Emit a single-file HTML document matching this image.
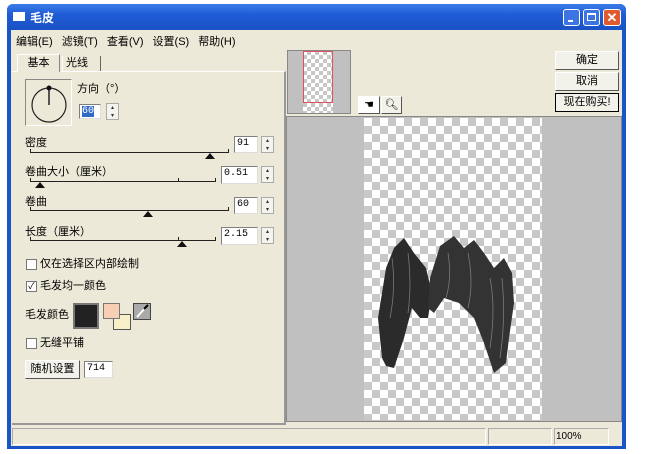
<!DOCTYPE html>
<html><head><meta charset="utf-8"><style>
body{margin:0;width:663px;height:454px;background:#fff;position:relative;overflow:hidden;font-family:"Liberation Sans","Noto Sans CJK SC",sans-serif;font-size:11px;color:#000}
.a{position:absolute}
.win{left:7px;top:4px;width:619px;height:445px;background:#1a55c8;border-radius:6px 6px 0 0}
.title{left:7px;top:4px;width:619px;height:26px;background:linear-gradient(#3a7be8,#1f5cd6 40%,#1a52c4);border-radius:6px 6px 0 0}
.body{left:11px;top:30px;width:611px;height:416px;background:#ece9d8}
.inp{background:#fff;border:1px solid #7f7f7f;border-right-color:#ddd;border-bottom-color:#ddd;box-sizing:border-box;font-size:10px;padding:1px 2px;font-family:"Liberation Mono",monospace}
.spin{width:13px;height:17px;border:1px solid #aaa;box-sizing:border-box;background:#f4f3ee;font-size:6px;line-height:8px;text-align:center;color:#333}
.btn{background:#f3f2ea;border:1px solid #fff;border-right-color:#555;border-bottom-color:#555;box-sizing:border-box;text-align:center;font-size:11px;line-height:16px}
.track{height:1px;background:#222}
.tick{width:1px;height:4px;background:#222}
.thumb{width:0;height:0;border-left:5px solid transparent;border-right:5px solid transparent;border-bottom:6px solid #111}
.cb{width:9px;height:9px;border:1px solid #777;background:#fff}
.chk{background-image:linear-gradient(45deg,#c8c8c8 25%,transparent 25%,transparent 75%,#c8c8c8 75%),linear-gradient(45deg,#c8c8c8 25%,#fff 25%,#fff 75%,#c8c8c8 75%);background-size:16px 16px;background-position:0 0,8px 8px}
</style></head><body>
<div class="a win"></div>
<div class="a title"></div>
<div class="a" style="left:13px;top:12px;width:12px;height:9px;background:#fff"></div>
<div class="a" style="left:30px;top:9px;color:#fff;font-size:12px;font-weight:bold">毛皮</div>
<div class="a" style="left:563px;top:9px;width:17px;height:17px;background:#3c74e4;border:1px solid #fff;border-radius:3px;box-sizing:border-box"><div class="a" style="left:4px;top:10px;width:5px;height:2px;background:#fff"></div></div>
<div class="a" style="left:583px;top:9px;width:17px;height:17px;background:#3c74e4;border:1px solid #fff;border-radius:3px;box-sizing:border-box"><div class="a" style="left:3px;top:3px;width:9px;height:8px;border:1px solid #fff;border-top-width:2px;box-sizing:border-box"></div></div>
<div class="a" style="left:603px;top:9px;width:18px;height:17px;background:#e05a30;border:1px solid #fff;border-radius:3px;box-sizing:border-box;color:#fff;font-size:13px;font-weight:bold;text-align:center;line-height:15px">✕</div>
<div class="a body"></div>
<div class="a" style="left:16px;top:33px;font-size:11px;word-spacing:6px">编辑(E) 滤镜(T) 查看(V) 设置(S) 帮助(H)</div>
<!-- tabs -->
<div class="a" style="left:12px;top:71px;width:272px;height:351px;border-top:1px solid #fff;border-right:2px solid #999;border-bottom:2px solid #999"></div>
<div class="a" style="left:17px;top:54px;width:43px;height:18px;background:#ece9d8;border:1px solid #fff;border-bottom:none;border-right:1px solid #888;box-sizing:border-box;text-align:center;line-height:16px">基本</div>
<div class="a" style="left:62px;top:56px;width:39px;height:15px;border-left:1px solid #fff;border-right:1px solid #666;box-sizing:border-box;padding-left:3px;line-height:14px">光线</div>
<!-- dial -->
<div class="a" style="left:25px;top:79px;width:47px;height:47px;border:1px solid #888;border-right-color:#fff;border-bottom-color:#fff;box-sizing:border-box"></div>
<svg class="a" style="left:25px;top:79px" width="47" height="47"><circle cx="24" cy="26" r="17" fill="none" stroke="#222" stroke-width="1.2"/><line x1="24" y1="26" x2="24" y2="9" stroke="#222" stroke-width="1.5"/><circle cx="24" cy="9" r="2.5" fill="#111"/></svg>
<div class="a" style="left:77px;top:80px">方向（°）</div>
<div class="a inp" style="left:79px;top:104px;width:22px;height:15px"><span style="background:#316ac5;color:#fff">60</span></div>
<div class="a spin" style="left:106px;top:103px">▴<br>▾</div>
<!-- sliders -->
<div class="a" style="left:25px;top:134px">密度</div>
<div class="a track" style="left:30px;top:152px;width:198px"></div><div class="a tick" style="left:30px;top:149px"></div><div class="a tick" style="left:228px;top:149px"></div>
<div class="a thumb" style="left:205px;top:153px"></div>
<div class="a inp" style="left:234px;top:136px;width:24px;height:17px">91</div>
<div class="a spin" style="left:261px;top:136px">▴<br>▾</div>

<div class="a" style="left:25px;top:163px">卷曲大小（厘米）</div>
<div class="a track" style="left:30px;top:181px;width:185px"></div><div class="a tick" style="left:30px;top:178px"></div><div class="a tick" style="left:178px;top:178px"></div><div class="a tick" style="left:215px;top:178px"></div>
<div class="a thumb" style="left:35px;top:182px"></div>
<div class="a inp" style="left:221px;top:166px;width:37px;height:18px">0.51</div>
<div class="a spin" style="left:261px;top:166px">▴<br>▾</div>

<div class="a" style="left:25px;top:193px">卷曲</div>
<div class="a track" style="left:30px;top:210px;width:198px"></div><div class="a tick" style="left:30px;top:207px"></div><div class="a tick" style="left:228px;top:207px"></div>
<div class="a thumb" style="left:143px;top:211px"></div>
<div class="a inp" style="left:234px;top:197px;width:24px;height:17px">60</div>
<div class="a spin" style="left:261px;top:197px">▴<br>▾</div>

<div class="a" style="left:25px;top:223px">长度（厘米）</div>
<div class="a track" style="left:30px;top:240px;width:185px"></div><div class="a tick" style="left:30px;top:237px"></div><div class="a tick" style="left:178px;top:237px"></div><div class="a tick" style="left:215px;top:237px"></div>
<div class="a thumb" style="left:177px;top:241px"></div>
<div class="a inp" style="left:221px;top:227px;width:37px;height:18px">2.15</div>
<div class="a spin" style="left:261px;top:227px">▴<br>▾</div>

<div class="a cb" style="left:26px;top:259px"></div><div class="a" style="left:40px;top:255px">仅在选择区内部绘制</div>
<div class="a cb" style="left:26px;top:281px;font-size:9px;line-height:9px;text-align:center">✓</div><div class="a" style="left:40px;top:277px">毛发均一颜色</div>
<div class="a" style="left:25px;top:306px">毛发颜色</div>
<div class="a" style="left:73px;top:303px;width:26px;height:26px;background:#222;border:2px solid #777;box-sizing:border-box"></div>
<div class="a" style="left:113px;top:314px;width:16px;height:14px;background:#f8f0c8;border:1px solid #555"></div>
<div class="a" style="left:103px;top:303px;width:15px;height:14px;background:#f8cfb5;border:1px solid #777"></div>
<div class="a" style="left:133px;top:303px;width:18px;height:17px;background:#aaa;border:1px solid #444;box-sizing:border-box"><svg width="16" height="15"><line x1="3" y1="13" x2="12" y2="3" stroke="#fff" stroke-width="2"/><line x1="10" y1="5" x2="14" y2="1" stroke="#000" stroke-width="2"/></svg></div>
<div class="a cb" style="left:26px;top:338px"></div><div class="a" style="left:40px;top:334px">无缝平铺</div>
<div class="a btn" style="left:25px;top:360px;width:55px;height:19px;line-height:17px">随机设置</div>
<div class="a inp" style="left:84px;top:361px;width:29px;height:17px">714</div>
<!-- preview thumb -->
<div class="a" style="left:287px;top:50px;width:64px;height:64px;background:#c0c0c0;border:1px solid #888;box-sizing:border-box"></div>
<div class="a chk" style="left:303px;top:51px;width:30px;height:62px;background-size:8px 8px;background-position:0 0,4px 4px"></div>
<div class="a" style="left:303px;top:51px;width:30px;height:52px;border:1px solid #e05060;box-sizing:border-box"></div>
<div class="a btn" style="left:358px;top:96px;width:22px;height:18px;background:#fff">☚</div>
<div class="a btn" style="left:381px;top:96px;width:21px;height:18px">🔍︎</div>
<div class="a btn" style="left:555px;top:51px;width:64px;height:19px">确定</div>
<div class="a btn" style="left:555px;top:72px;width:64px;height:19px">取消</div>
<div class="a btn" style="left:555px;top:93px;width:64px;height:19px;border:1px solid #000">现在购买!</div>
<!-- canvas -->
<div class="a" style="left:286px;top:116px;width:336px;height:306px;background:#c0c0c0;border:1px solid #888;box-sizing:border-box"></div>
<div class="a chk" style="left:364px;top:118px;width:178px;height:302px"></div>
<svg class="a" style="left:364px;top:118px" width="178" height="302">
<path d="M18 240 L14 200 L22 150 L30 130 L40 120 L50 135 L62 150 L68 175 L64 200 L56 200 L48 190 L40 220 L30 250 L22 248Z" fill="#2b2b2b"/>
<path d="M64 190 L66 160 L76 128 L90 118 L100 130 L110 122 L120 135 L130 150 L140 140 L148 155 L150 185 L145 220 L142 245 L130 255 L120 225 L110 200 L95 185 L80 180 L70 195Z" fill="#333"/>
<g stroke="#999" stroke-width="0.8" fill="none" opacity=".7"><path d="M28 140 Q32 170 26 200"/><path d="M44 135 Q48 165 44 195"/><path d="M84 135 Q88 160 82 180"/><path d="M104 135 Q110 165 104 190"/><path d="M126 160 Q132 190 126 230"/><path d="M138 160 Q142 200 136 240"/></g>
</svg>
<!-- status -->
<div class="a" style="left:12px;top:428px;width:474px;height:17px;border:1px solid #aaa;border-right-color:#fff;border-bottom-color:#fff;box-sizing:border-box"></div>
<div class="a" style="left:488px;top:428px;width:64px;height:17px;border:1px solid #aaa;border-right-color:#fff;border-bottom-color:#fff;box-sizing:border-box"></div>
<div class="a" style="left:554px;top:428px;width:55px;height:17px;border:1px solid #aaa;border-right-color:#fff;border-bottom-color:#fff;box-sizing:border-box;font-size:10px;padding:2px 1px">100%</div>
</body></html>
